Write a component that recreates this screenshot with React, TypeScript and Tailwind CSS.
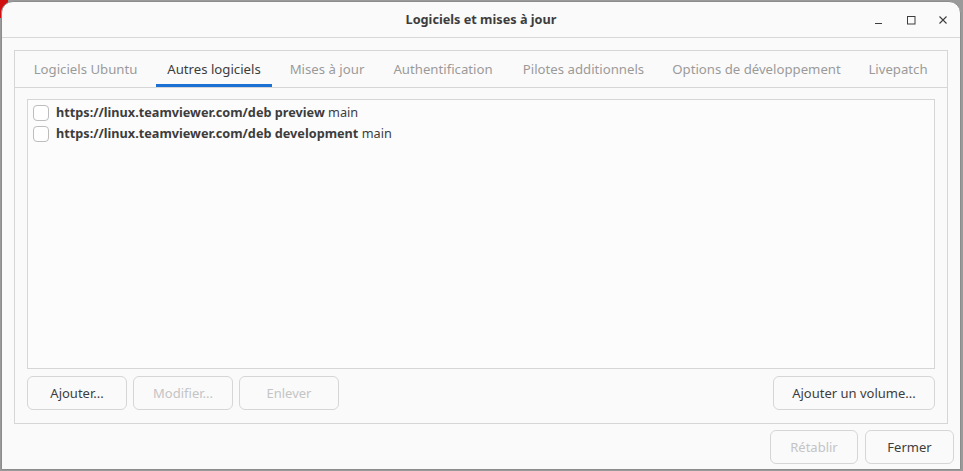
import React from "react";

const tabs = [
  { label: "Logiciels Ubuntu", w: "w-[133px]" },
  { label: "Autres logiciels", w: "w-[124px]", active: true },
  { label: "Mises à jour", w: "w-[102px]" },
  { label: "Authentification", w: "w-[130px]" },
  { label: "Pilotes additionnels", w: "w-[151px]" },
  { label: "Options de développement", w: "w-[195px]" },
  { label: "Livepatch", w: "w-[88px]" },
];

function Btn({ children, disabled, w }: { children: React.ReactNode; disabled?: boolean; w: string }) {
  return (
    <button
      className={`${w} h-[34px] pt-[2px] rounded-[6px] border border-[#d6d6d6] bg-[#fafafa] text-[13px] ${
        disabled ? "text-[#c4c4c4]" : "text-[#3d3d3d]"
      }`}
    >
      {children}
    </button>
  );
}

export default function App() {
  return (
    <div
      className="w-[963px] h-[471px] bg-[#9a9a9a] relative overflow-hidden"
      style={{ fontFamily: "'Noto Sans', 'Open Sans', sans-serif" }}
    >
      <div className="absolute left-0 top-0 w-[8px] h-[18px] bg-[#d01010]" />
      <div className="absolute left-[1px] top-[1px] w-[960px] h-[469px] rounded-t-[12px] bg-[#fafafa] border border-[#8c8c8c] flex flex-col overflow-hidden">
        {/* title bar */}
        <div className="h-[36px] shrink-0 flex items-center justify-center relative border-b border-[#d8d8d8]">
          <span className="text-[12.7px] font-bold text-[#3d3d3d]">Logiciels et mises à jour</span>
          <div className="absolute right-[1px] top-0 h-full flex items-center text-[#3d3d3d]">
            <div className="w-[32px] h-[24px] flex items-center justify-center">
              <svg width="10" height="10" viewBox="0 0 10 10">
                <line x1="1" y1="8.5" x2="8" y2="8.5" stroke="#3d3d3d" strokeWidth="1" />
              </svg>
            </div>
            <div className="w-[32px] h-[24px] flex items-center justify-center">
              <svg width="10" height="10" viewBox="0 0 10 10">
                <rect x="1.5" y="1.5" width="7.5" height="7.5" fill="none" stroke="#3d3d3d" strokeWidth="1" />
              </svg>
            </div>
            <div className="w-[32px] h-[24px] flex items-center justify-center">
              <svg width="10" height="10" viewBox="0 0 10 10">
                <path d="M1.5 1.5 L8.5 8.5 M8.5 1.5 L1.5 8.5" stroke="#3d3d3d" strokeWidth="1.1" />
              </svg>
            </div>
          </div>
        </div>

        {/* notebook */}
        <div className="mx-[12px] mt-[12px] h-[374px] border border-[#d6d6d6] flex flex-col">
          <div className="h-[37px] shrink-0 flex pl-[4px] border-b border-[#d6d6d6]">
            {tabs.map((t) => (
              <div key={t.label} className={`${t.w} shrink-0 relative flex items-center justify-center pt-[2px]`}>
                <span className={`text-[13.2px] ${t.active ? "text-[#3d3d3d]" : "text-[#9a9a9a]"}`}>{t.label}</span>
                {t.active && <div className="absolute left-[4px] right-[4px] bottom-0 h-[3px] bg-[#1c72d4]" />}
              </div>
            ))}
          </div>
          <div className="flex-1 flex flex-col px-[12px] pt-[11px] pb-[12px]">
            <div className="h-[270px] border border-[#d6d6d6] bg-[#fcfcfc] pt-[2px]">
              {[
                ["https://linux.teamviewer.com/deb preview", "main"],
                ["https://linux.teamviewer.com/deb development", "main"],
              ].map(([a, b]) => (
                <div key={a} className="h-[21px] flex items-center pl-[5px]">
                  <div className="w-[16px] h-[16px] rounded-[4px] border border-[#bdbdbd] bg-white mr-[7px]" />
                  <span className="text-[12.7px] text-[#3d3d3d]">
                    <b>{a}</b> {b}
                  </span>
                </div>
              ))}
            </div>
            <div className="mt-[7px] flex gap-[6px]">
              <Btn w="w-[100px]">Ajouter...</Btn>
              <Btn w="w-[100px]" disabled>
                Modifier...
              </Btn>
              <Btn w="w-[100px]" disabled>
                Enlever
              </Btn>
              <div className="flex-1" />
              <Btn w="w-[162px]">Ajouter un volume...</Btn>
            </div>
          </div>
        </div>

        <div className="flex justify-end gap-[7px] pr-[6px] mt-[6px]">
          <Btn w="w-[88px]" disabled>
            Rétablir
          </Btn>
          <Btn w="w-[89px]">Fermer</Btn>
        </div>
      </div>
    </div>
  );
}
